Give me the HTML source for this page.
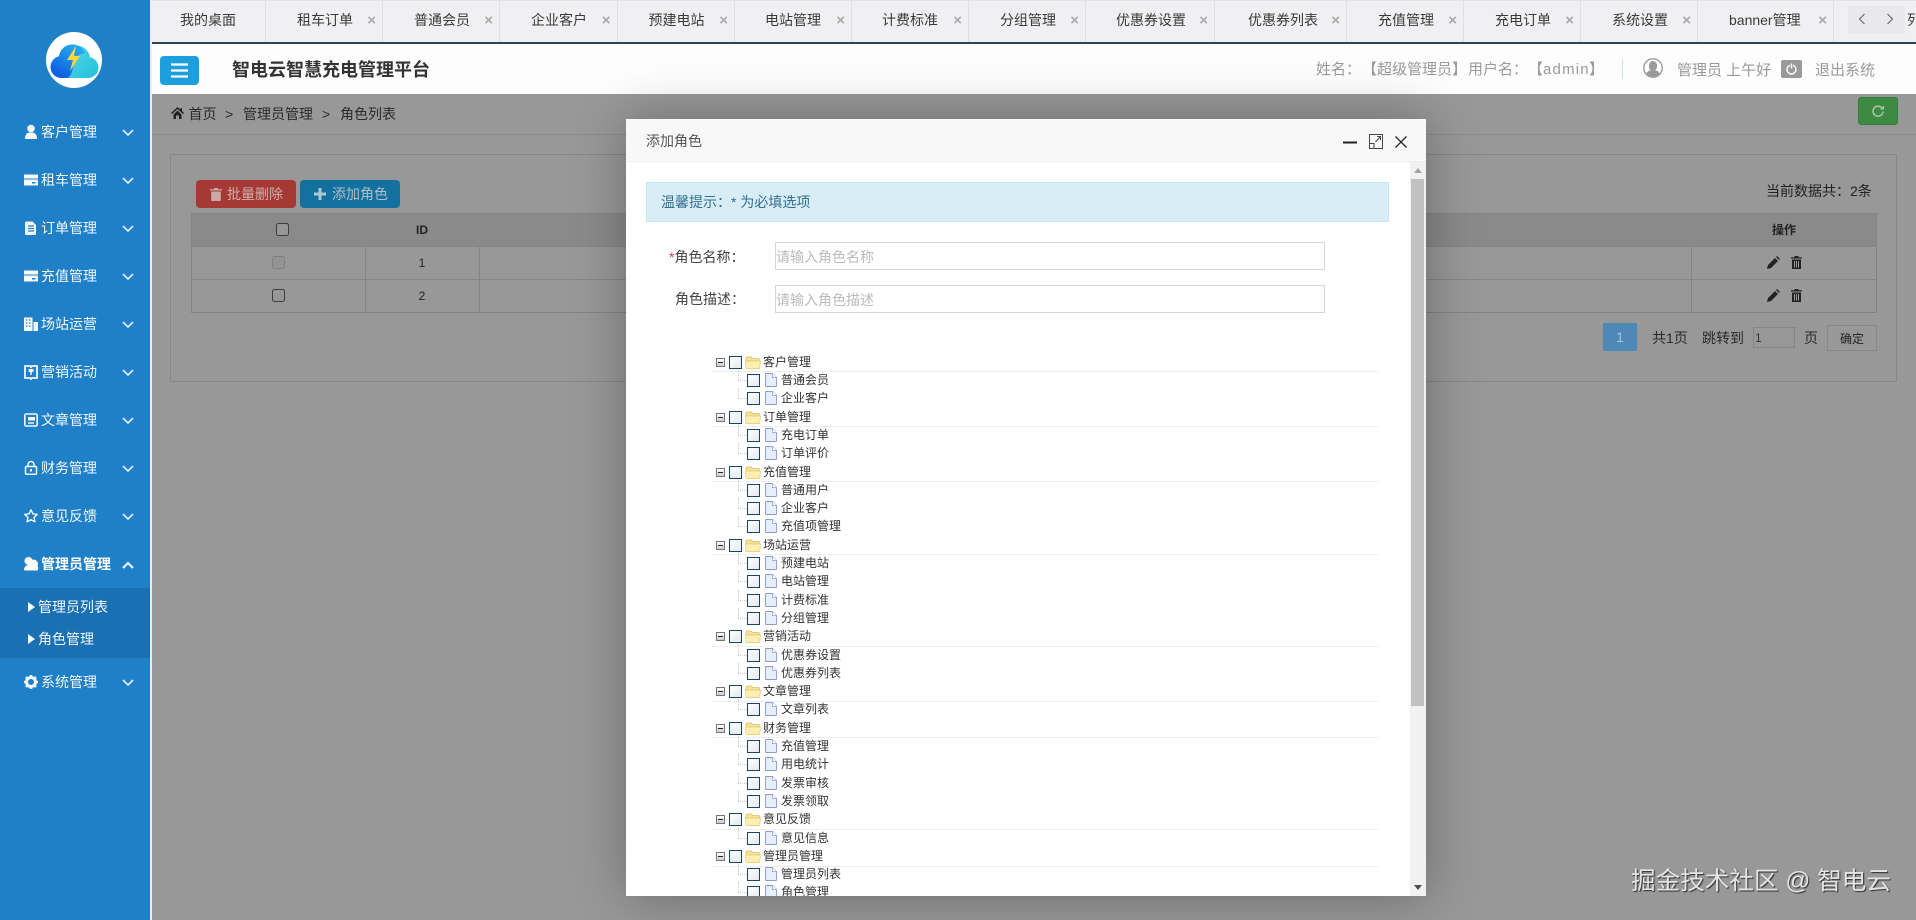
<!DOCTYPE html>
<html lang="zh-CN">
<head>
<meta charset="utf-8">
<title>智电云智慧充电管理平台</title>
<style>
*{box-sizing:border-box;margin:0;padding:0}
html,body{width:1916px;height:920px;overflow:hidden;background:#fff;font-family:"Liberation Sans","Noto Sans CJK SC",sans-serif;font-size:14px;color:#333}
.a{position:absolute;white-space:nowrap}
.t{position:absolute;white-space:nowrap;line-height:20px;height:20px}
#side{position:absolute;left:0;top:0;width:150px;height:920px;background:#1f80c7}
#edge{position:absolute;left:150px;top:0;width:2px;height:920px;background:#e8eef3}
.mi{position:absolute;left:41px;color:#f2f7fb;line-height:20px;height:20px;white-space:nowrap}
.ic{position:absolute;left:23px;width:16px;height:16px}
.chev{position:absolute;left:122px;width:12px;height:8px;margin-top:1px}
#sub{position:absolute;left:0;top:588px;width:150px;height:70px;background:#1970b3}
.tri{position:absolute;left:28px;width:0;height:0;border-left:7px solid #fff;border-top:5.5px solid transparent;border-bottom:5.5px solid transparent}
#tabs{position:absolute;left:152px;top:0;width:1764px;height:44px;background:#f0f0f2;border-top:1px solid #e2e2e2;border-bottom:2px solid #2c4458;overflow:hidden}
.tab{position:absolute;top:0;height:41px;border-right:1px solid #dfdfe2;line-height:38px;color:#3a3a3a;white-space:nowrap}
.x{position:absolute;top:0;color:#a8a8a8;font-size:15px;font-weight:bold;line-height:39px}
#head{position:absolute;left:152px;top:44px;width:1764px;height:50px;background:#fdfdfd}
#cont{position:absolute;left:152px;top:94px;width:1764px;height:826px;background:#989898}
.g{color:#9a9a9a}
#panel{position:absolute;left:170px;top:154px;width:1727px;height:228px;border:1px solid #878787}
.ln{position:absolute;background:#858585}
#modal{position:absolute;left:626px;top:119px;width:800px;height:777px;background:#fff;box-shadow:1px 1px 50px rgba(0,0,0,.3);overflow:hidden}
#mt{position:absolute;left:0;top:0;width:800px;height:43px;background:#f8f8f8;border-bottom:1px solid #eee;line-height:44px;padding-left:20px;color:#555}
#sb{position:absolute;left:784px;top:43px;width:16px;height:734px;background:#f1f1f1}
#th{position:absolute;left:1px;top:17px;width:13px;height:527px;background:#c1c1c1}
#alert{position:absolute;left:20px;top:63px;width:743px;height:40px;background:#d9edf7;border:1px solid #bce8f1;color:#31708f;line-height:38px;padding-left:14px;font-size:14px}
.ipt{position:absolute;left:149px;width:550px;height:28px;border:1px solid #d6d6d6;color:#bbb;line-height:28px;padding-left:0;font-size:14px;background:#fff}
#tree{position:absolute;left:86px;top:233.8px;width:666px;font-size:12px;color:#333}
.r{position:relative;height:18.3px;line-height:17px;white-space:nowrap}
.r.p::after{content:"";position:absolute;left:0;right:0;top:18.7px;height:1px;background:#eee}
.r i{position:absolute;display:block}
.mn{left:4px;top:5px;width:9px;height:9px;border:1px solid #777;background:linear-gradient(#fff,#ccc)}
.mn::after{content:"";position:absolute;left:1px;top:3px;width:5px;height:1px;background:#222}
.cb{width:13px;height:13px;border:1px solid #1e4463;background:linear-gradient(135deg,#fff,#e3e9ec)}
.p .cb{left:17px;top:3px}
.c .cb{left:35px;top:3px}
.p span{position:absolute;left:51px;top:1px}
.c span{position:absolute;left:69px;top:1px}
.fo{left:33px;top:3px;width:16px;height:13px}
.fi{left:53px;top:2px;width:12px;height:14px}
.c::before{content:"";position:absolute;left:26px;top:9px;width:9px;border-top:1px dotted #ccc}
.c::after{content:"";position:absolute;left:26px;top:-1px;height:10px;border-left:1px dotted #ccc}
#wm{position:absolute;left:1631px;top:864px;font-size:24.6px;line-height:36px;color:#e4e4e4;text-shadow:1px 1px 1px #2e2e2e;white-space:nowrap}
</style>
</head>
<body>

<div id="side">
<svg class="a" style="left:46px;top:32px" width="56" height="56" viewBox="0 0 56 56">
<defs>
<linearGradient id="lg1" x1="0" y1="1" x2="0.6" y2="0"><stop offset="0" stop-color="#0a50e0"/><stop offset="1" stop-color="#22a8ee"/></linearGradient>
<linearGradient id="lg2" x1="0" y1="0" x2="1" y2="1"><stop offset="0" stop-color="#58d6e8"/><stop offset="1" stop-color="#22c0dc"/></linearGradient>
</defs>
<circle cx="28" cy="28" r="28" fill="#fff"/>
<path d="M22 46h20a10.500 10.500 0 0 0 2-20.800 13.500 13.500 0 0 0-26-3z" fill="url(#lg2)"/>
<path d="M15 46a11 11 0 0 1-2-21.700A13.500 13.500 0 0 1 39 21c-5 1-10 3-11 8-1 5-1 13-6 17z" fill="url(#lg1)"/>
<path d="M30 14l-9 14h6l-3 11 10-15h-6z" fill="#ffd53c"/>
</svg>

<svg class="ic" style="top:124px" viewBox="0 0 16 16" fill="#f4f8fb"><circle cx="8" cy="4.500" r="3.800"/><path d="M2 15c0-4 1.500-6 4-6.500h4c2.500.5 4 2.500 4 6.500z"/></svg>
<div class="mi" style="top:122px">客户管理</div>
<svg class="chev" style="top:128px" viewBox="0 0 12 8"><path d="M1 1l5 5 5-5" fill="none" stroke="#e6f0f8" stroke-width="1.600"/></svg>

<svg class="ic" style="top:172px" viewBox="0 0 16 16" fill="#f4f8fb"><path d="M1 2.500h14v4H1zM1 7.500h14v6H1z"/><rect x="9" y="10" width="3.500" height="1.500" fill="#1f80c7"/></svg>
<div class="mi" style="top:170px">租车管理</div>
<svg class="chev" style="top:176px" viewBox="0 0 12 8"><path d="M1 1l5 5 5-5" fill="none" stroke="#e6f0f8" stroke-width="1.600"/></svg>

<svg class="ic" style="top:220px" viewBox="0 0 16 16"><path d="M3.500 1.500h6l3.500 3.500v8.500a1.500 1.500 0 0 1-1.500 1.500h-8A1.500 1.500 0 0 1 2 13.500v-10.500a1.500 1.500 0 0 1 1.500-1.500z" fill="#f4f8fb"/><path d="M5 6h6M5 8.500h6M5 11h6" stroke="#1f80c7" stroke-width="1.200"/></svg>
<div class="mi" style="top:218px">订单管理</div>
<svg class="chev" style="top:224px" viewBox="0 0 12 8"><path d="M1 1l5 5 5-5" fill="none" stroke="#e6f0f8" stroke-width="1.600"/></svg>

<svg class="ic" style="top:268px" viewBox="0 0 16 16" fill="#f4f8fb"><path d="M1 2.500h14v4H1zM1 7.500h14v6H1z"/><rect x="9" y="10" width="3.500" height="1.500" fill="#1f80c7"/></svg>
<div class="mi" style="top:266px">充值管理</div>
<svg class="chev" style="top:272px" viewBox="0 0 12 8"><path d="M1 1l5 5 5-5" fill="none" stroke="#e6f0f8" stroke-width="1.600"/></svg>

<svg class="ic" style="top:316px" viewBox="0 0 16 16" fill="#f4f8fb"><path d="M1 1.500h8.500V15H1z"/><path d="M10.500 6H15v9h-4.500z"/><path d="M3 4h1.500M6 4h1.500M3 7h1.500M6 7h1.500M3 10h1.500M6 10h1.500" stroke="#1f80c7" stroke-width="1.200"/></svg>
<div class="mi" style="top:314px">场站运营</div>
<svg class="chev" style="top:320px" viewBox="0 0 12 8"><path d="M1 1l5 5 5-5" fill="none" stroke="#e6f0f8" stroke-width="1.600"/></svg>

<svg class="ic" style="top:364px" viewBox="0 0 16 16"><path d="M2 2h5l1 1 1-1h5v12H9l-1 1-1-1H2z" fill="none" stroke="#f4f8fb" stroke-width="1.800"/><path d="M5.500 5h5v3h-5z" fill="#f4f8fb"/><path d="M8 8v3" stroke="#f4f8fb" stroke-width="1.500"/></svg>
<div class="mi" style="top:362px">营销活动</div>
<svg class="chev" style="top:368px" viewBox="0 0 12 8"><path d="M1 1l5 5 5-5" fill="none" stroke="#e6f0f8" stroke-width="1.600"/></svg>

<svg class="ic" style="top:412px" viewBox="0 0 16 16"><rect x="1.800" y="2" width="12.400" height="12" rx="1.500" fill="none" stroke="#f4f8fb" stroke-width="1.600"/><path d="M5 5h7v3.500H5z" fill="#f4f8fb"/><path d="M5 11h6" stroke="#f4f8fb" stroke-width="1.400"/></svg>
<div class="mi" style="top:410px">文章管理</div>
<svg class="chev" style="top:416px" viewBox="0 0 12 8"><path d="M1 1l5 5 5-5" fill="none" stroke="#e6f0f8" stroke-width="1.600"/></svg>

<svg class="ic" style="top:460px" viewBox="0 0 16 16"><rect x="2.500" y="6.500" width="11" height="7.800" rx="1" fill="none" stroke="#f4f8fb" stroke-width="1.500"/><path d="M5 6.500V4.500a3 3 0 0 1 6 0v2" fill="none" stroke="#f4f8fb" stroke-width="1.500"/><rect x="7" y="9" width="2" height="2.500" fill="#f4f8fb"/></svg>
<div class="mi" style="top:458px">财务管理</div>
<svg class="chev" style="top:464px" viewBox="0 0 12 8"><path d="M1 1l5 5 5-5" fill="none" stroke="#e6f0f8" stroke-width="1.600"/></svg>

<svg class="ic" style="top:508px" viewBox="0 0 16 16"><path d="M8 1.800l1.900 4 4.400.6-3.200 3 .8 4.400L8 11.700l-3.900 2.100.8-4.400-3.200-3 4.400-.6z" fill="none" stroke="#f4f8fb" stroke-width="1.400" stroke-linejoin="round"/></svg>
<div class="mi" style="top:506px">意见反馈</div>
<svg class="chev" style="top:512px" viewBox="0 0 12 8"><path d="M1 1l5 5 5-5" fill="none" stroke="#e6f0f8" stroke-width="1.600"/></svg>

<svg class="ic" style="top:556px" viewBox="0 0 16 16" fill="#fff"><circle cx="5.500" cy="5" r="4"/><circle cx="10.500" cy="8" r="4.500"/><path d="M1 14c0-3 2-5 5-5l8 1c1.500 1 1.500 3 .5 4.500H2z"/></svg>
<div class="mi" style="top:554px;font-weight:bold;color:#fff">管理员管理</div>
<svg class="chev" style="top:560px" viewBox="0 0 12 8"><path d="M1 7l5-5 5 5" fill="none" stroke="#fff" stroke-width="2"/></svg>

<div id="sub"></div>
<div class="tri" style="top:601.500px"></div>
<div class="mi" style="left:38px;top:597px">管理员列表</div>
<div class="tri" style="top:633.500px"></div>
<div class="mi" style="left:38px;top:629px">角色管理</div>

<svg class="ic" style="top:674px" viewBox="0 0 16 16"><circle cx="8" cy="8" r="4.500" fill="none" stroke="#f4f8fb" stroke-width="3"/><path d="M8 1v3M8 12v3M1 8h3M12 8h3M3 3l2 2M11 11l2 2M13 3l-2 2M5 11l-2 2" stroke="#f4f8fb" stroke-width="2.600"/></svg>
<div class="mi" style="top:672px">系统管理</div>
<svg class="chev" style="top:678px" viewBox="0 0 12 8"><path d="M1 1l5 5 5-5" fill="none" stroke="#e6f0f8" stroke-width="1.600"/></svg>
</div>
<div id="edge"></div>

<div id="tabs">
<div class="tab" style="left:0;width:114px;padding-left:28px">我的桌面</div>
<div class="tab" style="left:114px;width:117px;padding-left:31px">租车订单<b class="x" style="right:6px">×</b></div>
<div class="tab" style="left:231px;width:117px;padding-left:31px">普通会员<b class="x" style="right:6px">×</b></div>
<div class="tab" style="left:348px;width:117.500px;padding-left:31px">企业客户<b class="x" style="right:6px">×</b></div>
<div class="tab" style="left:465.500px;width:117.500px;padding-left:31px">预建电站<b class="x" style="right:6px">×</b></div>
<div class="tab" style="left:583px;width:117px;padding-left:30px">电站管理<b class="x" style="right:6px">×</b></div>
<div class="tab" style="left:700px;width:117px;padding-left:30px">计费标准<b class="x" style="right:6px">×</b></div>
<div class="tab" style="left:817px;width:117px;padding-left:31px">分组管理<b class="x" style="right:6px">×</b></div>
<div class="tab" style="left:934px;width:129px;padding-left:30px">优惠券设置<b class="x" style="right:6px">×</b></div>
<div class="tab" style="left:1063px;width:132px;padding-left:33px">优惠券列表<b class="x" style="right:6px">×</b></div>
<div class="tab" style="left:1195px;width:117px;padding-left:31px">充值管理<b class="x" style="right:6px">×</b></div>
<div class="tab" style="left:1312px;width:117px;padding-left:31px">充电订单<b class="x" style="right:6px">×</b></div>
<div class="tab" style="left:1429px;width:117px;padding-left:31px">系统设置<b class="x" style="right:6px">×</b></div>
<div class="tab" style="left:1546px;width:136px;padding-left:31px">banner管理<b class="x" style="right:6px">×</b></div>
<div class="a" style="left:1696px;top:5px;width:57px;height:28px;background:#e9e9ec"></div>
<svg class="a" style="left:1706px;top:12px" width="8" height="12" viewBox="0 0 8 12"><path d="M6.500 1L1.500 6l5 5" fill="none" stroke="#666" stroke-width="1.100"/></svg>
<svg class="a" style="left:1734px;top:12px" width="8" height="12" viewBox="0 0 8 12"><path d="M1.500 1l5 5-5 5" fill="none" stroke="#666" stroke-width="1.100"/></svg>
<div class="a" style="left:1755px;top:0;line-height:38px;color:#3a3a3a">列表</div>
</div>

<div id="head">
<div class="a" style="left:8px;top:12px;width:39px;height:29px;background:#1e9fdd;border-radius:4px"></div>
<svg class="a" style="left:18px;top:18px" width="19" height="17" viewBox="0 0 19 17"><path d="M1 2.500h17M1 8.500h17M1 14.500h17" stroke="#fff" stroke-width="2.200"/></svg>
<div class="t" style="left:80px;top:16px;font-size:18px;font-weight:bold;color:#333;line-height:20px">智电云智慧充电管理平台</div>
<div class="t g" style="left:1164px;top:16px;font-size:15px">姓名：</div>
<div class="t g" style="left:1210px;top:16px;font-size:15px">【超级管理员】</div>
<div class="t g" style="left:1316px;top:16px;font-size:15px">用户名：</div>
<div class="t g" style="left:1376px;top:16px;font-size:15px">【</div>
<div class="t g" style="left:1391px;top:16px;font-size:15px;letter-spacing:1.200px">admin</div>
<div class="t g" style="left:1437px;top:16px;font-size:15px">】</div>
<div class="a" style="left:1470px;top:15px;width:1px;height:20px;background:#cfe0e6"></div>
<svg class="a" style="left:1491px;top:13px" width="20" height="22" viewBox="0 0 20 22"><circle cx="10" cy="11" r="9.200" fill="#fff" stroke="#9a9a9a" stroke-width="1.400"/><ellipse cx="10" cy="9" rx="4.200" ry="5" fill="#9a9a9a"/><path d="M3 17c1.500-3 4-4 7-4s5.500 1 7 4c-2 2.600-4.500 3.500-7 3.500S5 19.600 3 17z" fill="#9a9a9a"/></svg>
<div class="t g" style="left:1525px;top:17px;font-size:15px">管理员 上午好</div>
<svg class="a" style="left:1629px;top:16px" width="21" height="18" viewBox="0 0 21 18"><rect width="21" height="18" rx="2" fill="#9a9a9d"/><circle cx="10.500" cy="9.500" r="4.500" fill="none" stroke="#fff" stroke-width="1.400"/><path d="M10.500 3v5.500" stroke="#9a9a9d" stroke-width="3.400"/><path d="M10.500 3.500v5" stroke="#fff" stroke-width="1.400"/></svg>
<div class="t g" style="left:1663px;top:17px;font-size:15px">退出系统</div>
</div>

<div id="cont"></div>

<!-- breadcrumb -->
<div class="a" style="left:152px;top:134px;width:1764px;height:1px;background:#8b8b8b"></div>
<svg class="a" style="left:171px;top:107px" width="13" height="12" viewBox="0 0 13 12"><path d="M6.500 0L0 6l1 1 5.500-5 5.500 5 1-1-2-2V1H9.500v1.500zM2.500 7.500V12H5V8.500h3V12h2.500V7.500L6.500 3.500z" fill="#222"/></svg>
<div class="t" style="left:188.500px;top:104px;color:#2a2a2a">首页</div>
<div class="t" style="left:225px;top:104px;color:#2a2a2a">&gt;</div>
<div class="t" style="left:243px;top:104px;color:#2a2a2a">管理员管理</div>
<div class="t" style="left:322px;top:104px;color:#2a2a2a">&gt;</div>
<div class="t" style="left:340px;top:104px;color:#2a2a2a">角色列表</div>
<div class="a" style="left:1858px;top:97px;width:40px;height:28px;background:#3d8a43;border-radius:3px;border:1px solid #367c3c"></div>
<svg class="a" style="left:1871px;top:104px" width="14" height="14" viewBox="0 0 14 14"><path d="M11.500 5A5 5 0 1 0 12 7.500" fill="none" stroke="#a9c9ab" stroke-width="1.500"/><path d="M9 5.500h4V1.500z" fill="#a9c9ab"/></svg>

<div id="panel"></div>
<div class="a" style="left:196px;top:180px;width:100px;height:28px;background:#a53a35;border-radius:4px"></div>
<svg class="a" style="left:210px;top:187px" width="12" height="14" viewBox="0 0 12 14" fill="#cfa9a7"><path d="M4 1h4v1.200h4V3.500H0V2.200h4zM1.200 4.500h9.600V14H1.200z"/></svg>
<div class="t" style="left:227px;top:184px;color:#cfb0ae">批量删除</div>
<div class="a" style="left:300px;top:180px;width:100px;height:28px;background:#13719f;border-radius:4px"></div>
<svg class="a" style="left:314px;top:188px" width="12" height="12" viewBox="0 0 12 12"><path d="M6 0v12M0 6h12" stroke="#b3c7d3" stroke-width="3"/></svg>
<div class="t" style="left:332px;top:184px;color:#aebfca">添加角色</div>
<div class="t" style="left:1766px;top:181px;color:#222">当前数据共：2条</div>

<!-- table -->
<div class="a" style="left:191px;top:213px;width:1686px;height:34px;background:#8a8a8a;border:1px solid #858585"></div>
<div class="a" style="left:191px;top:247px;width:1686px;height:66px;border:1px solid #828282;border-top:0"></div>
<div class="ln" style="left:191px;top:279px;width:1686px;height:1px"></div>
<div class="ln" style="left:365px;top:247px;width:1px;height:65px"></div>
<div class="ln" style="left:479px;top:247px;width:1px;height:65px"></div>
<div class="ln" style="left:1691px;top:247px;width:1px;height:65px"></div>
<div class="a" style="left:276px;top:223px;width:13px;height:13px;border:1px solid #3d3d3d;border-radius:2.500px;background:#979797"></div>
<div class="a" style="left:272px;top:256px;width:13px;height:13px;border:1px solid #808080;border-radius:2.500px;background:#949494"></div>
<div class="a" style="left:272px;top:289px;width:13px;height:13px;border:1px solid #3d3d3d;border-radius:2.500px;background:#979797"></div>
<div class="t" style="left:412px;top:220px;width:20px;text-align:center;font-weight:bold;font-size:12px;color:#222">ID</div>
<div class="t" style="left:412px;top:253px;width:20px;text-align:center;font-size:12px;color:#222">1</div>
<div class="t" style="left:412px;top:286px;width:20px;text-align:center;font-size:12px;color:#222">2</div>
<div class="t" style="left:1772px;top:220px;font-size:12px;font-weight:bold;color:#222">操作</div>
<svg class="a" style="left:1767px;top:256px" width="13" height="13" viewBox="0 0 13 13"><path d="M0 13l1-4 7-7 3 3-7 7zM9 1l1-1 3 3-1 1z" fill="#222"/></svg>
<svg class="a" style="left:1791px;top:256px" width="11" height="13" viewBox="0 0 11 13"><path d="M3.500 0h4v1.200H11v1.300H0V1.200h3.500zM1 3.500h9V13H1zM3 5v6.500h1V5zM5 5v6.500h1V5zM7 5v6.500h1V5z" fill="#222" fill-rule="evenodd"/></svg>
<svg class="a" style="left:1767px;top:289px" width="13" height="13" viewBox="0 0 13 13"><path d="M0 13l1-4 7-7 3 3-7 7zM9 1l1-1 3 3-1 1z" fill="#222"/></svg>
<svg class="a" style="left:1791px;top:289px" width="11" height="13" viewBox="0 0 11 13"><path d="M3.500 0h4v1.200H11v1.300H0V1.200h3.500zM1 3.500h9V13H1zM3 5v6.500h1V5zM5 5v6.500h1V5zM7 5v6.500h1V5z" fill="#222" fill-rule="evenodd"/></svg>

<!-- pagination -->
<div class="a" style="left:1603px;top:323px;width:34px;height:28px;background:#4e88b5;color:#a9c6dd;text-align:center;line-height:28px">1</div>
<div class="t" style="left:1652px;top:328px;color:#2a2a2a">共1页</div>
<div class="t" style="left:1702px;top:328px;color:#2a2a2a">跳转到</div>
<div class="a" style="left:1753px;top:327px;width:42px;height:21px;border:1px solid #858585;font-size:12px;line-height:21px;padding-left:1px;color:#333">1</div>
<div class="t" style="left:1804px;top:328px;color:#2a2a2a">页</div>
<div class="a" style="left:1827px;top:325px;width:50px;height:26px;border:1px solid #878787;text-align:center;line-height:26px;font-size:12px;color:#222">确定</div>

<div id="modal">
<div id="mt">添加角色</div>
<svg class="a" style="left:716px;top:15px" width="16" height="16" viewBox="0 0 16 16"><path d="M1 8.500h14" stroke="#222" stroke-width="2"/></svg>
<svg class="a" style="left:743px;top:15px" width="14" height="15" viewBox="0 0 14 15"><path d="M.5.500h13v14H.5zM.5 9.500h4.500v5M6.500 8l5-5.500M8 2.500h3.500V6" fill="none" stroke="#444" stroke-width="1"/></svg>
<svg class="a" style="left:769px;top:17px" width="12" height="12" viewBox="0 0 12 12"><path d="M.5.500l11 11M11.500.500l-11 11" stroke="#222" stroke-width="1.300"/></svg>

<div id="alert">温馨提示：* 为必填选项</div>

<div class="t" style="left:43px;top:128px;color:#444"><span style="color:#d03a3a">*</span>角色名称：</div>
<div class="ipt" style="top:123px">请输入角色名称</div>
<div class="t" style="left:49px;top:170px;color:#444">角色描述：</div>
<div class="ipt" style="top:166px">请输入角色描述</div>

<svg width="0" height="0" style="position:absolute">
<symbol id="fo" viewBox="0 0 16 13"><path d="M1 2.500q0-1.500 1.500-1.500h4l1 1.500h6q1 0 1 1V5H1z" fill="#f5e39a" stroke="#d9bd5e" stroke-width=".7"/><path d="M.5 5h15l-.8 7q0 .6-.8.6H1.600q-.6 0-.7-.6z" fill="#fcefb4" stroke="#e3c86c" stroke-width=".7"/></symbol>
<symbol id="fi" viewBox="0 0 12 14"><path d="M1 .5h6.500l4 4V13a.5.5 0 0 1-.5.5H1a.5.5 0 0 1-.5-.5V1A.5.5 0 0 1 1 .5z" fill="#e6edfb" stroke="#8b9bcb" stroke-width=".9"/><path d="M7.500.5v4h4" fill="#fff" stroke="#8b9bcb" stroke-width=".7"/></symbol>
</svg>

<div id="tree">
<div class="r p"><i class="mn"></i><i class="cb"></i><svg class="fo" style="position:absolute"><use href="#fo"/></svg><span>客户管理</span></div>
<div class="r c"><i class="cb"></i><svg class="fi" style="position:absolute"><use href="#fi"/></svg><span>普通会员</span></div>
<div class="r c"><i class="cb"></i><svg class="fi" style="position:absolute"><use href="#fi"/></svg><span>企业客户</span></div>
<div class="r p"><i class="mn"></i><i class="cb"></i><svg class="fo" style="position:absolute"><use href="#fo"/></svg><span>订单管理</span></div>
<div class="r c"><i class="cb"></i><svg class="fi" style="position:absolute"><use href="#fi"/></svg><span>充电订单</span></div>
<div class="r c"><i class="cb"></i><svg class="fi" style="position:absolute"><use href="#fi"/></svg><span>订单评价</span></div>
<div class="r p"><i class="mn"></i><i class="cb"></i><svg class="fo" style="position:absolute"><use href="#fo"/></svg><span>充值管理</span></div>
<div class="r c"><i class="cb"></i><svg class="fi" style="position:absolute"><use href="#fi"/></svg><span>普通用户</span></div>
<div class="r c"><i class="cb"></i><svg class="fi" style="position:absolute"><use href="#fi"/></svg><span>企业客户</span></div>
<div class="r c"><i class="cb"></i><svg class="fi" style="position:absolute"><use href="#fi"/></svg><span>充值项管理</span></div>
<div class="r p"><i class="mn"></i><i class="cb"></i><svg class="fo" style="position:absolute"><use href="#fo"/></svg><span>场站运营</span></div>
<div class="r c"><i class="cb"></i><svg class="fi" style="position:absolute"><use href="#fi"/></svg><span>预建电站</span></div>
<div class="r c"><i class="cb"></i><svg class="fi" style="position:absolute"><use href="#fi"/></svg><span>电站管理</span></div>
<div class="r c"><i class="cb"></i><svg class="fi" style="position:absolute"><use href="#fi"/></svg><span>计费标准</span></div>
<div class="r c"><i class="cb"></i><svg class="fi" style="position:absolute"><use href="#fi"/></svg><span>分组管理</span></div>
<div class="r p"><i class="mn"></i><i class="cb"></i><svg class="fo" style="position:absolute"><use href="#fo"/></svg><span>营销活动</span></div>
<div class="r c"><i class="cb"></i><svg class="fi" style="position:absolute"><use href="#fi"/></svg><span>优惠券设置</span></div>
<div class="r c"><i class="cb"></i><svg class="fi" style="position:absolute"><use href="#fi"/></svg><span>优惠券列表</span></div>
<div class="r p"><i class="mn"></i><i class="cb"></i><svg class="fo" style="position:absolute"><use href="#fo"/></svg><span>文章管理</span></div>
<div class="r c"><i class="cb"></i><svg class="fi" style="position:absolute"><use href="#fi"/></svg><span>文章列表</span></div>
<div class="r p"><i class="mn"></i><i class="cb"></i><svg class="fo" style="position:absolute"><use href="#fo"/></svg><span>财务管理</span></div>
<div class="r c"><i class="cb"></i><svg class="fi" style="position:absolute"><use href="#fi"/></svg><span>充值管理</span></div>
<div class="r c"><i class="cb"></i><svg class="fi" style="position:absolute"><use href="#fi"/></svg><span>用电统计</span></div>
<div class="r c"><i class="cb"></i><svg class="fi" style="position:absolute"><use href="#fi"/></svg><span>发票审核</span></div>
<div class="r c"><i class="cb"></i><svg class="fi" style="position:absolute"><use href="#fi"/></svg><span>发票领取</span></div>
<div class="r p"><i class="mn"></i><i class="cb"></i><svg class="fo" style="position:absolute"><use href="#fo"/></svg><span>意见反馈</span></div>
<div class="r c"><i class="cb"></i><svg class="fi" style="position:absolute"><use href="#fi"/></svg><span>意见信息</span></div>
<div class="r p"><i class="mn"></i><i class="cb"></i><svg class="fo" style="position:absolute"><use href="#fo"/></svg><span>管理员管理</span></div>
<div class="r c"><i class="cb"></i><svg class="fi" style="position:absolute"><use href="#fi"/></svg><span>管理员列表</span></div>
<div class="r c"><i class="cb"></i><svg class="fi" style="position:absolute"><use href="#fi"/></svg><span>角色管理</span></div>
</div>

<div id="sb">
<div id="th"></div>
<div class="a" style="left:3.500px;top:6px;border-left:4.500px solid transparent;border-right:4.500px solid transparent;border-bottom:5px solid #a3a3a3"></div>
<div class="a" style="left:3.500px;top:723px;border-left:4.500px solid transparent;border-right:4.500px solid transparent;border-top:5px solid #505050"></div>
</div>
</div>

<div id="wm">掘金技术社区 @ 智电云</div>

</body>
</html>
